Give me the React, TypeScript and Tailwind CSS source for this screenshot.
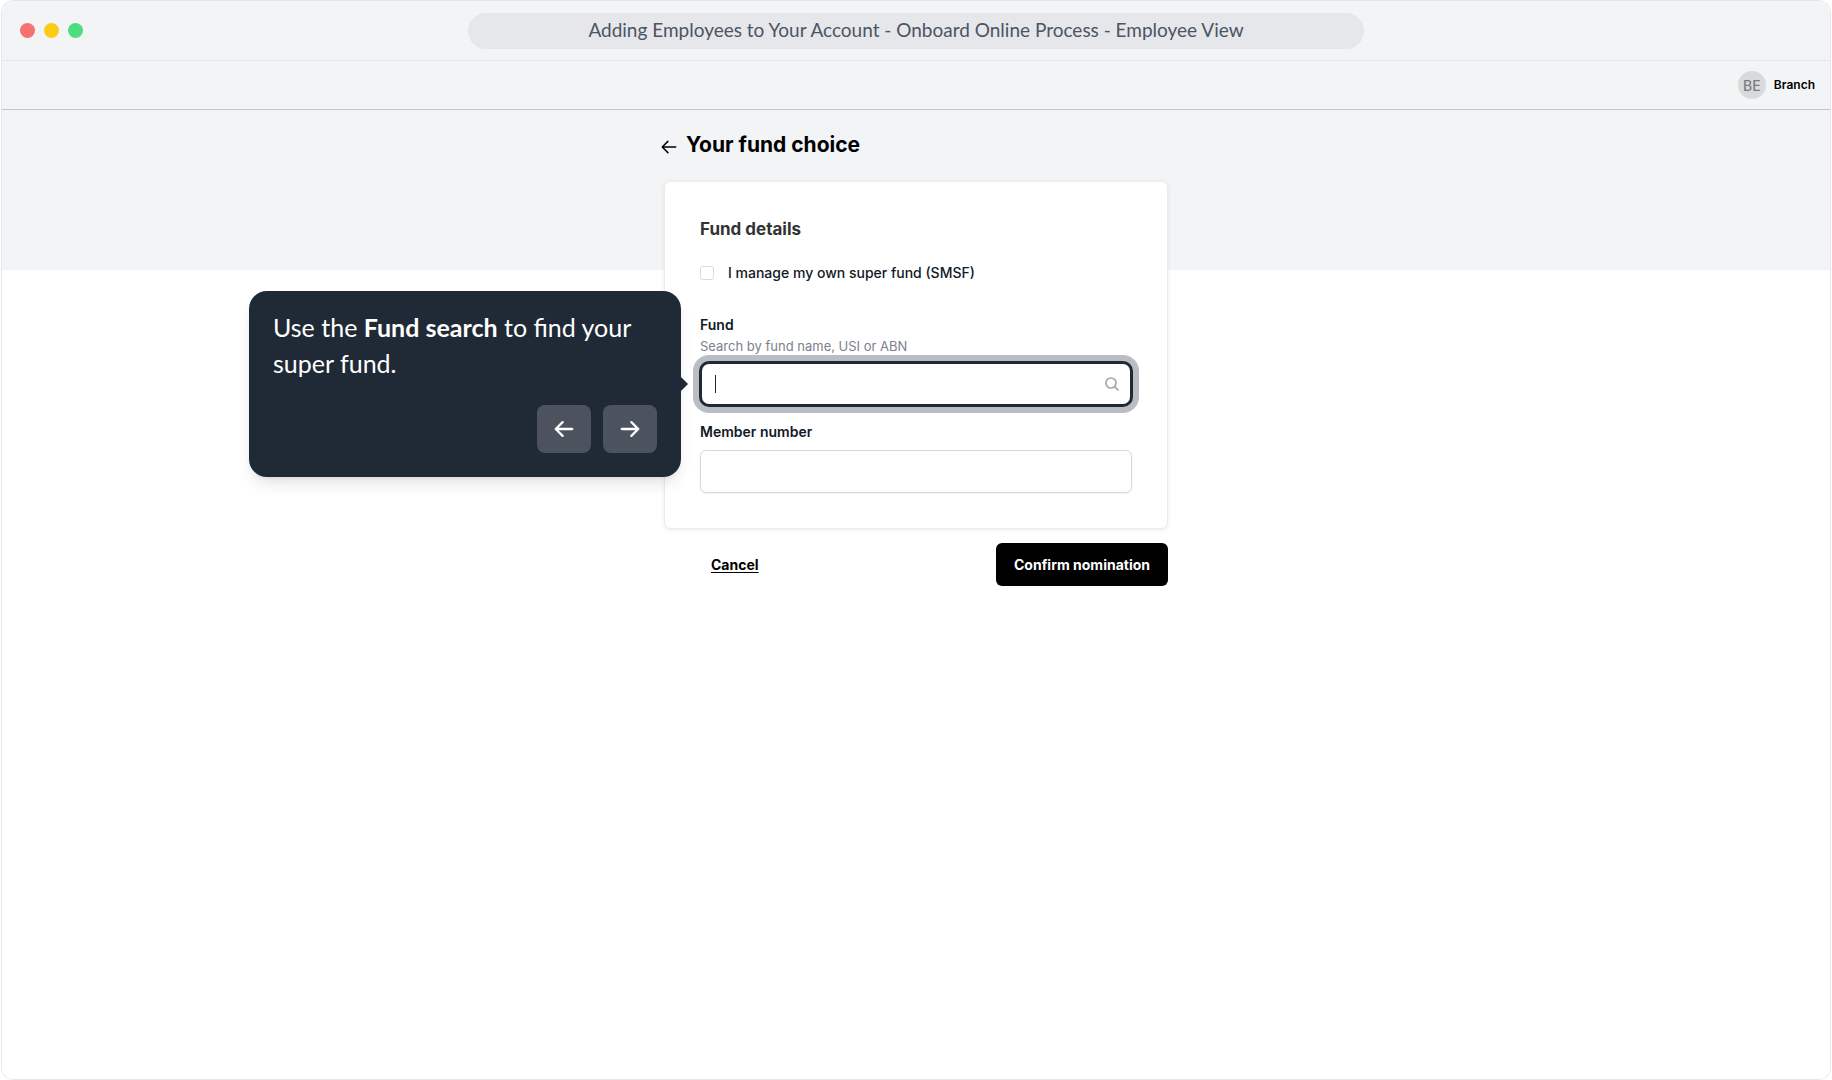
function TitleBar() {
  return (
    <header className="h-[60px] border-b border-gray-200 bg-gray-100 grid grid-cols-[1fr_minmax(0,896px)_1fr] items-center">
      <div className="flex items-center gap-[9px] pl-[18px]">
        <span className="size-[15px] rounded-full bg-[#f87171]" />
        <span className="size-[15px] rounded-full bg-[#facc15]" />
        <span className="size-[15px] rounded-full bg-[#4ade80]" />
      </div>
      <div className="h-9 rounded-full bg-gray-200 flex items-center justify-center font-[Lato,sans-serif] text-[19px] text-[#4b5563]">
        Adding Employees to Your Account - Onboard Online Process - Employee View
      </div>
    </header>
  );
}

function TopBar() {
  return (
    <div className="h-[49px] border-b border-[#c4c6ca] bg-gray-100 flex items-center justify-end gap-2 pr-[15px]">
      <span className="size-7 rounded-full bg-[#d9dadb] flex items-center justify-center text-[14px] font-medium text-[#7b7d7d]">
        BE
      </span>
      <span className="text-[12px] font-semibold text-black">Branch</span>
    </div>
  );
}

function Arrow({ size, strokeWidth, className }: { size: number; strokeWidth: number; className?: string }) {
  return (
    <svg
      className={className}
      width={size}
      height={size}
      viewBox="0 0 24 24"
      fill="none"
      stroke="currentColor"
      strokeWidth={strokeWidth}
      strokeLinecap="round"
      strokeLinejoin="round"
    >
      <path d="M13.5 4.5 21 12m0 0-7.5 7.5M21 12H3" />
    </svg>
  );
}

function SearchIcon() {
  return (
    <svg
      className="absolute right-[13px] top-1/2 -translate-y-1/2 pointer-events-none text-[#a3a7b0]"
      width="14"
      height="14"
      viewBox="0 0 14 14"
      fill="none"
      stroke="currentColor"
      strokeWidth="1.7"
      strokeLinecap="round"
    >
      <circle cx="6" cy="6" r="5" />
      <path d="M9.6 9.6 13 13" />
    </svg>
  );
}

function Tooltip() {
  return (
    <div className="absolute right-full top-1/2 -translate-y-1/2 mr-[19px] w-[432px] rounded-[18px] bg-[#1f2a36] px-6 pt-[18px] pb-6 shadow-lg font-[Lato,sans-serif] text-white">
      <span className="absolute -right-[7px] top-1/2 -translate-y-1/2 border-y-[7px] border-l-[7px] border-y-transparent border-l-[#1f2a36]" />
      <p className="text-[25px] leading-9">
        Use the <strong className="font-bold">Fund search</strong> to find your
        <br />
        super fund.
      </p>
      <div className="mt-6 flex justify-end gap-3">
        <button type="button" aria-label="Back" className="h-12 w-[54px] rounded-lg bg-[#4c535f] flex items-center justify-center">
          <Arrow size={22} strokeWidth={2.5} className="rotate-180" />
        </button>
        <button type="button" aria-label="Next" className="h-12 w-[54px] rounded-lg bg-[#4c535f] flex items-center justify-center">
          <Arrow size={22} strokeWidth={2.5} />
        </button>
      </div>
    </div>
  );
}

function FundForm() {
  return (
    <form className="w-full max-w-[504px] mx-auto">
      <div className="flex items-center gap-2 -ml-1 mb-5">
        <button type="button" aria-label="Go back" className="pt-1 text-black">
          <Arrow size={18} strokeWidth={2} className="rotate-180" />
        </button>
        <h1 className="text-[21px] leading-8 font-bold text-black">Your fund choice</h1>
      </div>

      <div className="rounded-md border border-[#ececed] bg-white p-[35px] shadow-[0_1px_4px_rgba(0,0,0,0.08)]">
        <h2 className="text-[17px] leading-6 font-bold text-[#333]">Fund details</h2>

        <div className="mt-5 flex items-center gap-[14px]">
          <input id="smsf" type="checkbox" className="appearance-none size-[14px] rounded-[3px] border border-[#d9dbdf] bg-white" />
          <label htmlFor="smsf" className="text-[14px] leading-6 font-medium text-[#111827]">
            I manage my own super fund (SMSF)
          </label>
        </div>

        <label htmlFor="fund" className="mt-[30px] block text-[14px] leading-5 font-semibold text-[#111827]">
          Fund
        </label>
        <p id="fund-hint" className="mt-px text-[13px] leading-5 text-[#7b818c]">
          Search by fund name, USI or ABN
        </p>
        <div className="relative mt-[6px]">
          <input
            id="fund"
            type="text"
            aria-describedby="fund-hint"
            className="block h-11 w-full rounded-[9px] border-2 border-[#1f2a36] bg-white px-3 text-[14px] outline-none shadow-[0_0_0_1px_#1f2a36,0_0_0_7px_#babec3]"
          />
          <span className="absolute left-[15px] top-1/2 -translate-y-1/2 h-[18px] w-px bg-[#1f2a36]" />
          <SearchIcon />
          <Tooltip />
        </div>

        <label htmlFor="member" className="mt-4 block text-[14px] leading-5 font-semibold text-[#111827]">
          Member number
        </label>
        <input
          id="member"
          type="text"
          className="mt-2 block h-[43px] w-full rounded-md border border-[#d5d7dc] bg-white px-3 text-[14px] outline-none shadow-xs"
        />
      </div>

      <div className="mt-[14px] flex items-center justify-between">
        <a href="#" className="ml-[47px] text-[14px] font-bold text-black underline underline-offset-2">
          Cancel
        </a>
        <button type="submit" className="h-[43px] rounded-md bg-black px-[18px] text-[14px] font-bold text-white">
          Confirm nomination
        </button>
      </div>
    </form>
  );
}

export default function App() {
  return (
    <div className="min-h-screen bg-white px-px flex font-[Inter,sans-serif]">
      <div className="flex-1 flex flex-col rounded-xl border border-gray-200 overflow-hidden">
        <TitleBar />
        <TopBar />
        <main className="flex-1 pt-[19px] bg-[linear-gradient(#f3f4f6_160px,#fff_160px)]">
          <FundForm />
        </main>
      </div>
    </div>
  );
}
